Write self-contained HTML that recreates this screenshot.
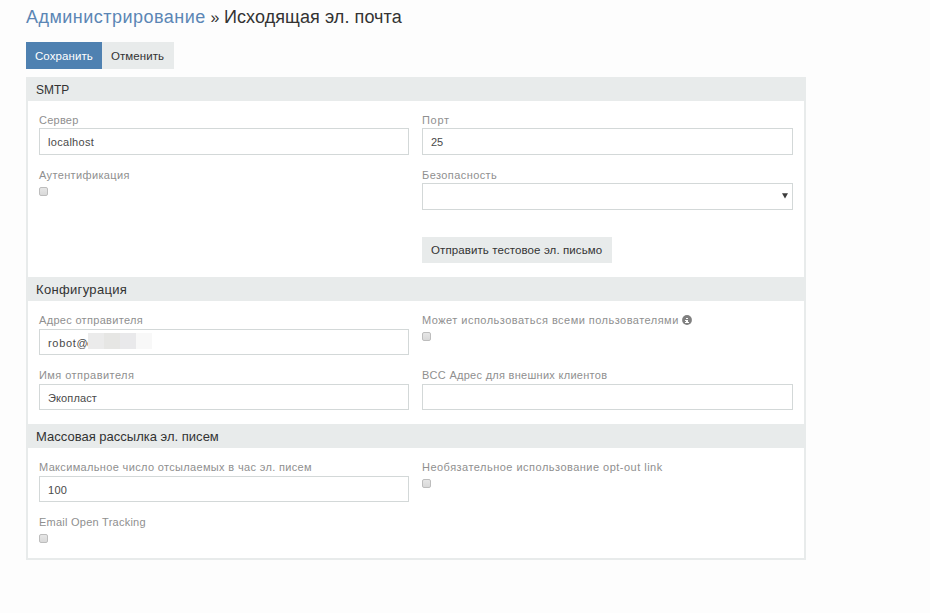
<!DOCTYPE html>
<html><head><meta charset="utf-8">
<style>
html,body{margin:0;padding:0;}
body{width:930px;height:613px;background:#fdfdfd;position:relative;overflow:hidden;font-family:"Liberation Sans",sans-serif;}
.a{position:absolute;white-space:nowrap;}
.t{line-height:1;}
.title{font-size:18px;color:#333;}
.title.bl{color:#5b86b5;}
.btn{position:absolute;}
.panel{position:absolute;left:26px;top:77px;width:776px;height:479px;border:2px solid #e8ebeb;background:#fff;}
.hdr{position:absolute;left:26px;width:780px;height:24px;background:#e8ebeb;}
.hdr span{position:absolute;left:10px;font-size:13px;color:#333;line-height:1;}
.lbl{font-size:11px;color:#8f8f8f;line-height:1;}
.inp{position:absolute;height:24px;border:1px solid #d3d8d8;background:#fff;}
.val{font-size:11px;color:#4a4a4a;line-height:1;}
.cb{position:absolute;width:7px;height:7px;border:1px solid #bdbdbd;border-radius:2px;background:linear-gradient(#e6e6e6,#d9d9d9);}
</style></head><body>
<div class="a t title bl" id="t1" style="left:26px;top:8px;letter-spacing:0.47px;">Администрирование</div>
<div class="a t title" id="t2" style="left:210.5px;top:10px;font-size:16px;">»</div>
<div class="a t title" id="t3" style="left:224px;top:8px;letter-spacing:0.08px;">Исходящая эл. почта</div>

<div class="btn" style="left:26px;top:42px;width:76px;height:27px;background:#4f81b1;"></div>
<div class="a t" id="save" style="left:35px;top:51px;font-size:11.5px;color:#fff;letter-spacing:0.07px;">Сохранить</div>
<div class="btn" style="left:102px;top:42px;width:72px;height:27px;background:#e8ebeb;"></div>
<div class="a t" id="cancel" style="left:111px;top:51px;font-size:11.5px;color:#333;letter-spacing:0.07px;">Отменить</div>

<div class="panel"></div>
<div class="hdr" style="top:77px;"><span id="h1" style="top:6px;transform:scaleX(0.92);transform-origin:0 0;">SMTP</span></div>
<div class="hdr" style="top:277px;"><span id="h2" style="top:6px;letter-spacing:0.33px;">Конфигурация</span></div>
<div class="hdr" style="top:424px;"><span id="h3" style="top:6px;letter-spacing:0.01px;">Массовая рассылка эл. писем</span></div>

<!-- SMTP -->
<div class="a lbl" id="l1" style="left:39px;top:115px;letter-spacing:0.24px;">Сервер</div>
<div class="inp" style="left:39px;top:128px;width:368px;height:25px;"></div>
<div class="a val" id="v1" style="left:48px;top:137px;letter-spacing:0.30px;">localhost</div>
<div class="a lbl" id="l2" style="left:422px;top:115px;letter-spacing:0.70px;">Порт</div>
<div class="inp" style="left:422px;top:128px;width:369px;height:25px;"></div>
<div class="a val" id="v2" style="left:431px;top:137px;letter-spacing:0.00px;">25</div>

<div class="a lbl" id="l3" style="left:39px;top:170px;letter-spacing:0.36px;">Аутентификация</div>
<div class="cb" style="left:39px;top:187px;"></div>
<div class="a lbl" id="l4" style="left:422px;top:170px;letter-spacing:0.42px;">Безопасность</div>
<div class="inp" style="left:422px;top:183px;width:369px;height:25px;"></div>
<svg class="a" style="left:782px;top:193px;" width="6" height="6" viewBox="0 0 6 6"><path d="M0 0.2H6L3 5.4Z" fill="#3c3c3c"/></svg>

<div class="btn" style="left:422px;top:237px;width:190px;height:26px;background:#e8ebeb;"></div>
<div class="a t" id="test" style="left:431px;top:245px;font-size:11.5px;color:#333;letter-spacing:0.10px;">Отправить тестовое эл. письмо</div>

<!-- Config -->
<div class="a lbl" id="l5" style="left:39px;top:315px;letter-spacing:0.31px;">Адрес отправителя</div>
<div class="inp" style="left:39px;top:329px;width:368px;"></div>
<div class="a val" id="v5" style="left:48px;top:338px;letter-spacing:0.70px;">robot@</div>
<div class="a val" id="v5c" style="left:87px;top:338px;">c</div>
<div class="a" style="left:88px;top:333px;width:16px;height:16px;background:#ebebeb;"></div>
<div class="a" style="left:104px;top:333px;width:16px;height:16px;background:#e6e6e4;"></div>
<div class="a" style="left:120px;top:333px;width:16px;height:16px;background:#e9e9eb;"></div>
<div class="a" style="left:136px;top:333px;width:16px;height:16px;background:#f8f8f8;"></div>
<div class="a lbl" id="l6" style="left:422px;top:315px;letter-spacing:0.47px;">Может использоваться всеми пользователями</div>
<svg class="a" style="left:682px;top:315px;" width="10" height="10" viewBox="0 0 10 10"><circle cx="5" cy="5" r="4.9" fill="#808080"/><g fill="#fff" shape-rendering="crispEdges"><rect x="4" y="3" width="2" height="1"/><rect x="4" y="5" width="2" height="3"/><rect x="3" y="5" width="1" height="1"/><rect x="3" y="7" width="4" height="1"/></g></svg>
<div class="cb" style="left:422px;top:332px;"></div>

<div class="a lbl" id="l7" style="left:39px;top:370px;letter-spacing:0.45px;">Имя отправителя</div>
<div class="inp" style="left:39px;top:384px;width:368px;"></div>
<div class="a val" id="v7" style="left:48px;top:393px;letter-spacing:0.13px;">Экопласт</div>
<div class="a lbl" id="l8" style="left:422px;top:370px;letter-spacing:0.28px;">BCC Адрес для внешних клиентов</div>
<div class="inp" style="left:422px;top:384px;width:369px;"></div>

<!-- Mass -->
<div class="a lbl" id="l9" style="left:39px;top:462px;letter-spacing:0.34px;">Максимальное число отсылаемых в час эл. писем</div>
<div class="inp" style="left:39px;top:476px;width:368px;"></div>
<div class="a val" id="v9" style="left:48px;top:485px;letter-spacing:0.30px;">100</div>
<div class="a lbl" id="l10" style="left:422px;top:462px;letter-spacing:0.48px;">Необязательное использование opt-out link</div>
<div class="cb" style="left:422px;top:479px;"></div>
<div class="a lbl" id="l11" style="left:39px;top:517px;letter-spacing:0.25px;">Email Open Tracking</div>
<div class="cb" style="left:39px;top:534px;"></div>
</body></html>
